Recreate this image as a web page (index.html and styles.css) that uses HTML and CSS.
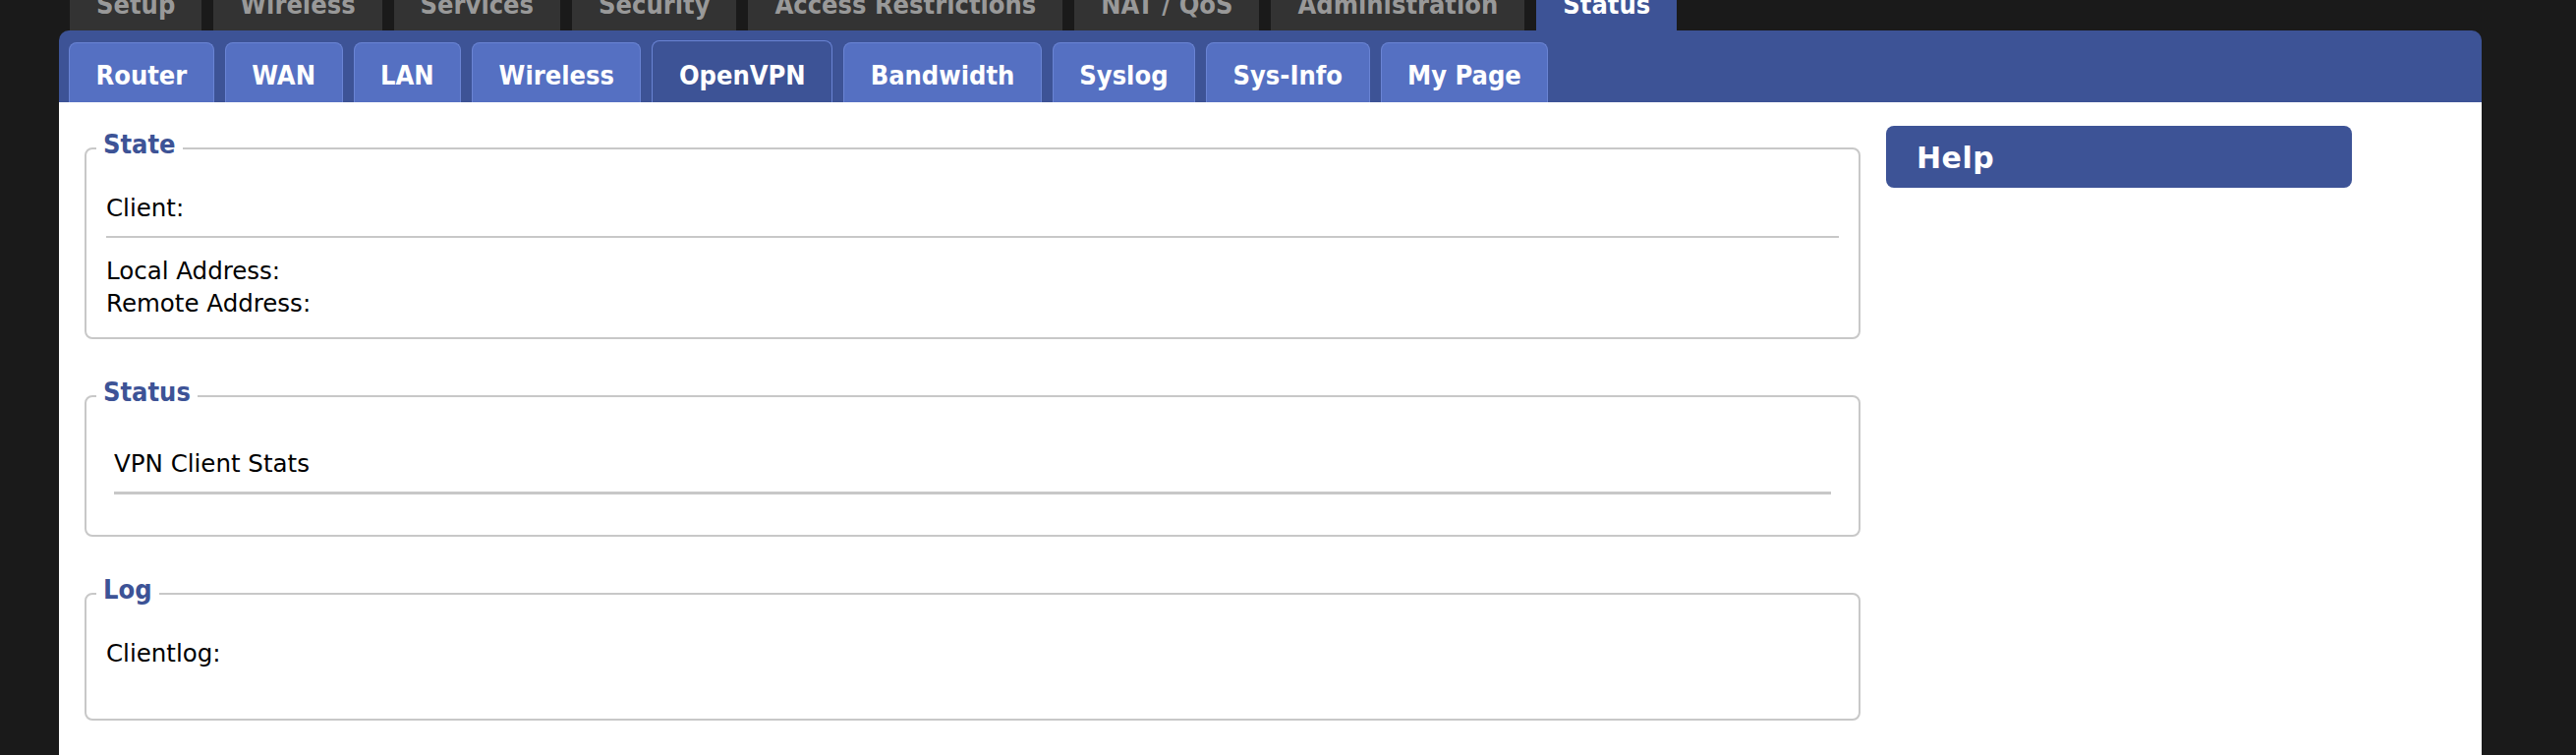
FILE: index.html
```html
<!DOCTYPE html>
<html lang="en">
<head>
    <meta charset="UTF-8">
    <title>Status - OpenVPN</title>
    <link rel="stylesheet" href="styles.css">
</head>
<body>
<div class="page">
    <!-- top level menu -->
    <ul class="mainnav">
        <li>Setup</li>
        <li>Wireless</li>
        <li>Services</li>
        <li>Security</li>
        <li>Access Restrictions</li>
        <li>NAT / QoS</li>
        <li>Administration</li>
        <li class="current">Status</li>
    </ul>

    <div class="panel">
        <!-- status sub menu -->
        <ul class="subnav">
            <li>Router</li>
            <li>WAN</li>
            <li>LAN</li>
            <li>Wireless</li>
            <li class="current">OpenVPN</li>
            <li>Bandwidth</li>
            <li>Syslog</li>
            <li>Sys-Info</li>
            <li>My Page</li>
        </ul>

        <div class="content">
            <div class="main">
                <fieldset>
                    <legend>State</legend>
                    <div class="line">Client:</div>
                    <div class="sep"></div>
                    <div class="line">Local Address:</div>
                    <div class="line">Remote Address:</div>
                </fieldset>

                <fieldset>
                    <legend>Status</legend>
                    <div class="stats">
                        <div class="line">VPN Client Stats</div>
                        <div class="sep thick"></div>
                    </div>
                </fieldset>

                <fieldset>
                    <legend>Log</legend>
                    <div class="line">Clientlog:</div>
                    <div class="log-body"></div>
                </fieldset>
            </div>

            <div class="help">
                <h2>Help</h2>
            </div>
        </div>
    </div>
</div>
</body>
</html>
```

FILE: styles.css
```css
body { margin: 0; background: #1a1a1a; font-family: "DejaVu Sans", sans-serif; color: #000; overflow: hidden; }
.page { margin-left: 60px; width: 2465px; }

/* menus use the narrow face */
.mainnav, .subnav, legend { font-family: "DejaVu Sans Condensed", "DejaVu Sans", sans-serif; font-stretch: condensed; }

/* top menu */
.mainnav { list-style: none; margin: -23px 0 0; padding: 0 0 0 11px; display: flex; gap: 12px; }
.mainnav li { background: #333; color: #999; font-weight: bold; font-size: 27px; line-height: 31px; padding: 12px 27px 11px; }
.mainnav .current { background: #3d5396; color: #fff; }

/* sub menu */
.subnav { list-style: none; margin: 0; padding: 10px 0 0 10px; display: flex; align-items: flex-end; gap: 11px; background: #3d5396; border-radius: 10px 10px 0 0; }
.subnav li { background: #5570c2; border: 1px solid #6a84d4; border-bottom: 0; border-radius: 8px 8px 0 0; color: #fff; font-weight: bold; font-size: 27px; line-height: 31px; padding: 17px 26.5px 12px; }
.subnav .current { background: #3d5396; padding-top: 19px; }

/* page body */
.content { background: #fff; display: flex; align-items: flex-start; gap: 26px; padding: 24px 132px 35px 26px; }
.main { flex: 1; padding-top: 4px; }

fieldset { margin: 0 0 39px; padding: 25px 20px 18px; border: 2px solid #c8c8c8; border-radius: 8px; min-width: 0; }
fieldset:last-child { margin-bottom: 0; }
legend { color: #3d5396; font-weight: bold; font-size: 27px; line-height: 30px; padding: 0 7px 8px; margin-left: -10px; }

.line { font-size: 24.5px; line-height: 33px; }
.sep { border-top: 2px solid #c8c8c8; margin: 12px 0 17px; }
.sep.thick { border-top-width: 3px; margin-bottom: 0; }
.stats { margin: 8px 8px 0; padding-bottom: 23px; }
.log-body { min-height: 32px; }

.help { width: 474px; background: #3d5396; border-radius: 8px; }
.help h2 { margin: 0; padding: 2px 0 0 31px; color: #fff; font-size: 30px; line-height: 61px; letter-spacing: 0.5px; }
```
